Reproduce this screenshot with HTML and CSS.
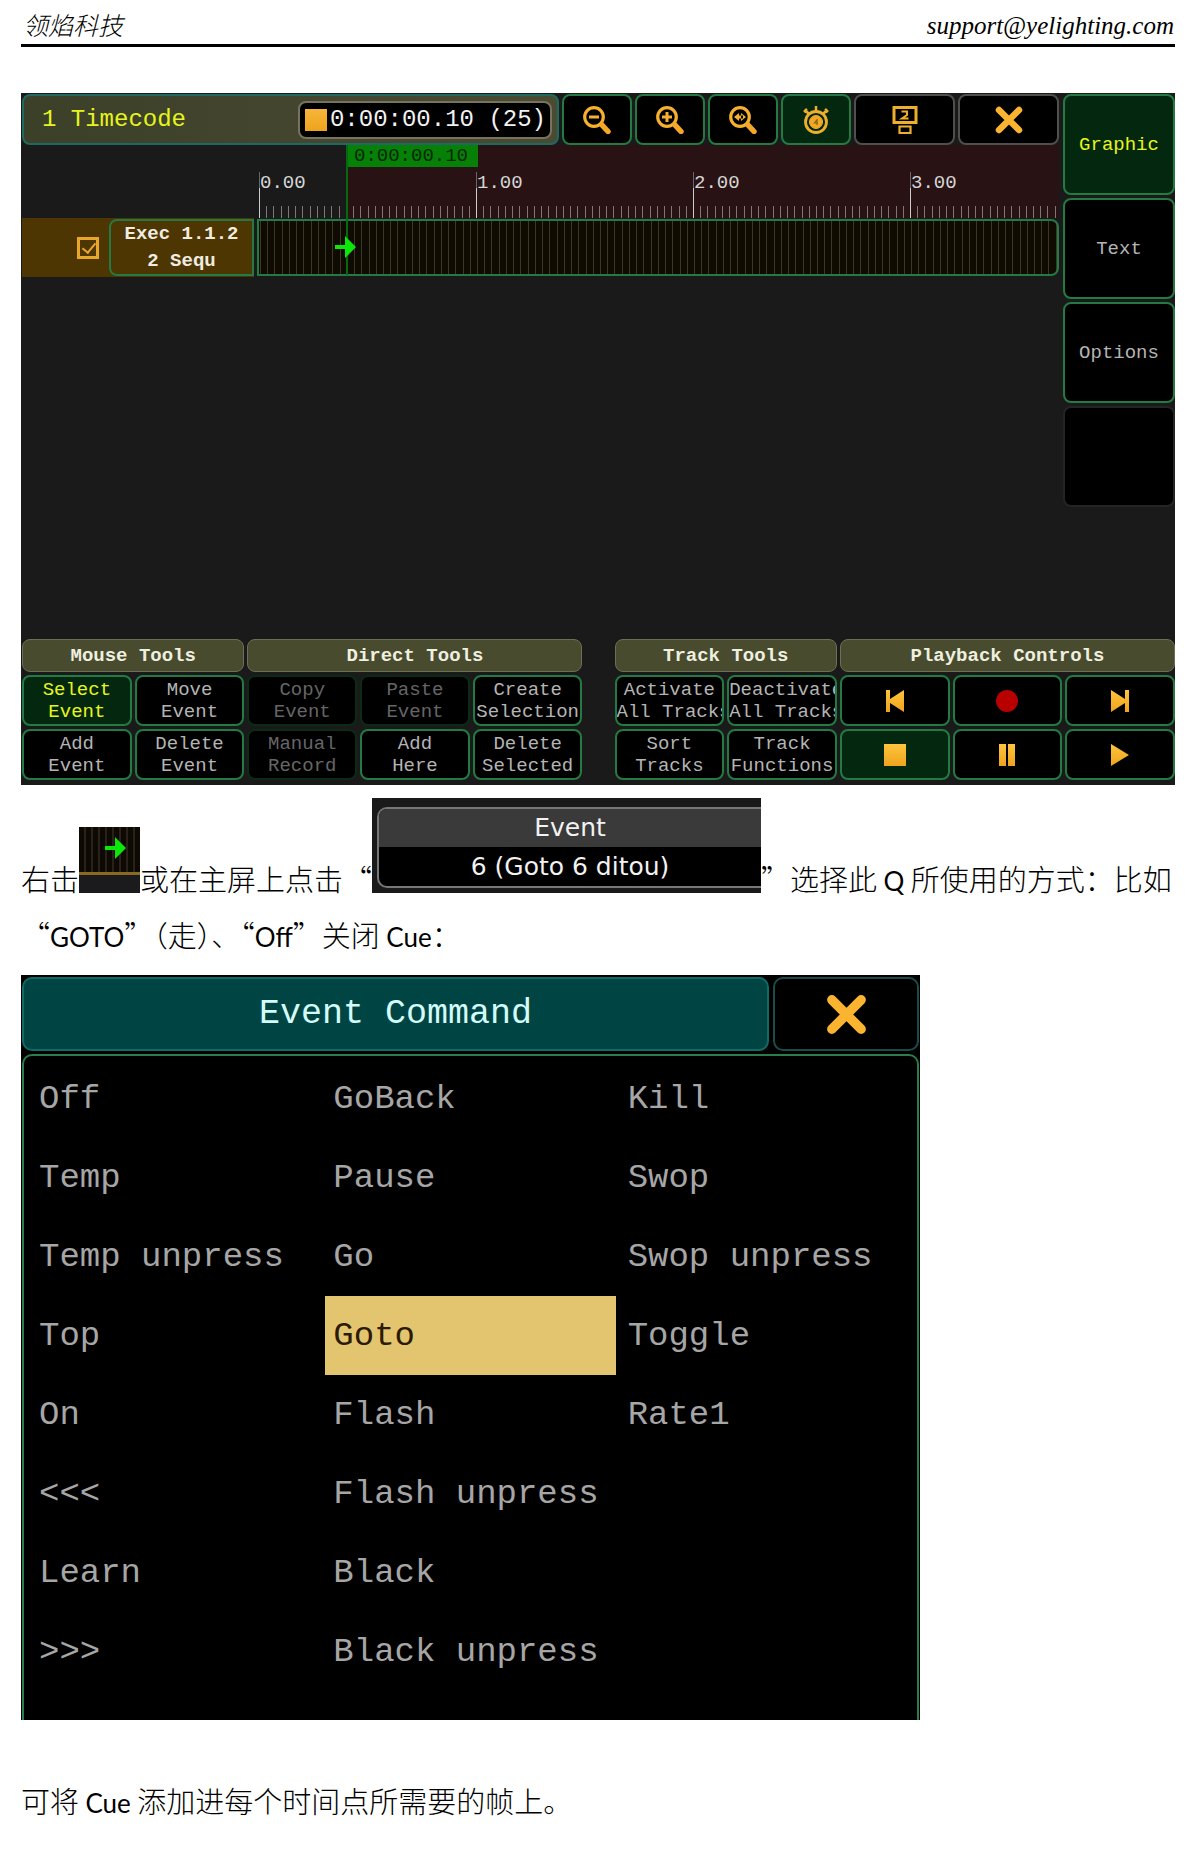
FILE: index.html
```html
<!DOCTYPE html>
<html lang="zh-CN">
<head>
<meta charset="utf-8">
<title>领焰科技</title>
<link rel="stylesheet" href="styles.css">
</head>
<body>
<svg class="defs" aria-hidden="true">
  <defs>
    <linearGradient id="gold" x1="0" y1="0" x2="0" y2="1">
      <stop offset="0" stop-color="#ffc53d"/><stop offset="1" stop-color="#eea31c"/>
    </linearGradient>
    <symbol id="lens" viewBox="0 0 28 28">
      <circle cx="11" cy="11" r="9.300" fill="none" stroke="#f5b02e" stroke-width="3.200"/>
      <path d="M19 19l6 6.500" stroke="#f5a826" stroke-width="5.500" stroke-linecap="round"/>
    </symbol>
    <symbol id="cross" viewBox="0 0 28 28">
      <path d="M4 4l20 20M24 4L4 24" stroke="#fab42f" stroke-width="6.500" stroke-linecap="round"/>
    </symbol>
    <symbol id="arrow" viewBox="0 0 22 22">
      <path d="M1 9h10V0l11 11-11 11v-9H1z" fill="#0be60b"/>
    </symbol>
  </defs>
</svg>

<header class="page-header">
  <span class="company">领焰科技</span>
  <a class="mail" href="mailto:support@yelighting.com">support@yelighting.com</a>
</header>

<main class="page">
  <section class="console" aria-label="Timecode">
    <div class="console-top">
      <div class="workspace">
        <div class="toolbar">
          <div class="title-bar">
            <h1 class="title">1 Timecode</h1>
            <div class="clock"><span class="clock-state"></span>0:00:00.10 (25)</div>
          </div>
          <button class="key tool" aria-label="Zoom out"><svg class="icon"><use href="#lens"/><path d="M6 11h10" stroke="#f5b02e" stroke-width="3"/></svg></button>
          <button class="key tool" aria-label="Zoom in"><svg class="icon"><use href="#lens"/><path d="M6 11h10M11 6v10" stroke="#f5b02e" stroke-width="3"/></svg></button>
          <button class="key tool" aria-label="Zoom to fit"><svg class="icon"><use href="#lens"/><path d="M5 11l5-4v8zM17 11l-5-4v8zM8 9.500h6v3H8z" fill="#f5b02e"/></svg></button>
          <button class="key tool active" aria-label="Timer">
            <svg class="icon" viewBox="0 0 28 28" fill="none" stroke="#eeb02c">
              <circle cx="14" cy="16" r="10.500" stroke-width="2.800"/><circle cx="14" cy="16" r="6.500" fill="#f5a623" stroke-width="1"/>
              <path d="M14 0v5M3 4l4 4M25 4l-4 4M2 6l3-3M26 6l-3-3" stroke-width="2.500"/><path d="M15.500 13l-3 4h3.500M15 14v5" stroke="#7a6a1a" stroke-width="1.200"/>
            </svg>
          </button>
          <button class="key tool wide plain" aria-label="Screen 2">
            <svg class="icon" viewBox="0 0 28 28" fill="none" stroke="#eeb02c">
              <path d="M3 1.500h22v15H3z" stroke-width="3"/><path d="M8.500 20.500h11v6.500h-11z" stroke-width="2.200"/>
              <path d="M10.500 5.500h5.500v3.500L11 12.500h6.500" stroke-width="2"/>
            </svg>
          </button>
          <button class="key tool wide plain" aria-label="Close"><svg class="icon"><use href="#cross"/></svg></button>
        </div>

        <div class="timeline">
          <div class="ruler">
            <span class="second">0.00</span><span class="second">1.00</span><span class="second">2.00</span><span class="second">3.00</span>
          </div>
          <div class="track-head">
            <input class="track-check" type="checkbox" checked aria-label="Exec 1.1.2">
            <div class="track-name">Exec 1.1.2<br>2 Sequ</div>
          </div>
          <div class="track"></div>
          <div class="playhead">
            <span class="playhead-time">0:00:00.10</span>
            <svg class="marker"><use href="#arrow"/></svg>
          </div>
        </div>
      </div>
      <nav class="side">
        <button class="key active">Graphic</button>
        <button class="key">Text</button>
        <button class="key">Options</button>
        <button class="key empty" aria-label="Empty"></button>
      </nav>
    </div>

    <div class="tools">
      <div class="tool-set">
        <h2 class="group span2">Mouse Tools</h2>
        <h2 class="group span3">Direct Tools</h2>
        <button class="key active">Select<br>Event</button>
        <button class="key">Move<br>Event</button>
        <button class="key" disabled>Copy<br>Event</button>
        <button class="key" disabled>Paste<br>Event</button>
        <button class="key">Create<br>Selection</button>
        <button class="key">Add<br>Event</button>
        <button class="key">Delete<br>Event</button>
        <button class="key" disabled>Manual<br>Record</button>
        <button class="key">Add<br>Here</button>
        <button class="key">Delete<br>Selected</button>
      </div>
      <div class="tool-set">
        <h2 class="group span2">Track Tools</h2>
        <h2 class="group span3">Playback Controls</h2>
        <button class="key">Activate<br>All Tracks</button>
        <button class="key">Deactivate<br>All Tracks</button>
        <button class="key" aria-label="Previous"><svg class="glyph" viewBox="0 0 22 22"><path d="M2 0h4v9L20 0v22L6 13v9H2z" fill="url(#gold)"/></svg></button>
        <button class="key" aria-label="Record"><svg class="glyph" viewBox="0 0 22 22"><circle cx="11" cy="11" r="11" fill="#b80000"/></svg></button>
        <button class="key" aria-label="Next"><svg class="glyph" viewBox="0 0 22 22"><path d="M20 0h-4v9L2 0v22l14-9v9h4z" fill="url(#gold)"/></svg></button>
        <button class="key">Sort<br>Tracks</button>
        <button class="key">Track<br>Functions</button>
        <button class="key active" aria-label="Stop"><svg class="glyph" viewBox="0 0 22 22"><path d="M0 0h22v22H0z" fill="url(#gold)"/></svg></button>
        <button class="key" aria-label="Pause"><svg class="glyph" viewBox="0 0 22 22"><path d="M3 0h7v22H3zM12 0h7v22h-7z" fill="url(#gold)"/></svg></button>
        <button class="key" aria-label="Play"><svg class="glyph" viewBox="0 0 22 22"><path d="M2 0l18 11L2 22z" fill="url(#gold)"/></svg></button>
      </div>
    </div>
  </section>

  <p class="prose">右击<span class="snippet"><svg class="marker"><use href="#arrow"/></svg></span>或在主屏上点击“<span class="event-card"><span class="event-box"><span class="event-head">Event</span><span class="event-body">6 (Goto 6 ditou)</span></span></span>”选择此 <span class="latin">Q</span> 所使用的方式：比如“<span class="latin">GOTO</span>”（走）、“<span class="latin">Off</span>”关闭 <span class="latin">Cue</span>：</p>

  <section class="dialog" aria-label="Event Command">
    <div class="dialog-bar">
      <h2 class="dialog-title">Event Command</h2>
      <button class="dialog-close" aria-label="Close"><svg class="icon-large"><use href="#cross"/></svg></button>
    </div>
    <div class="commands">
      <button class="command">Off</button>
      <button class="command">Temp</button>
      <button class="command">Temp unpress</button>
      <button class="command">Top</button>
      <button class="command">On</button>
      <button class="command">&lt;&lt;&lt;</button>
      <button class="command">Learn</button>
      <button class="command">&gt;&gt;&gt;</button>
      <button class="command">GoBack</button>
      <button class="command">Pause</button>
      <button class="command">Go</button>
      <button class="command selected">Goto</button>
      <button class="command">Flash</button>
      <button class="command">Flash unpress</button>
      <button class="command">Black</button>
      <button class="command">Black unpress</button>
      <button class="command">Kill</button>
      <button class="command">Swop</button>
      <button class="command">Swop unpress</button>
      <button class="command">Toggle</button>
      <button class="command">Rate1</button>
    </div>
  </section>

  <p class="prose closing">可将 <span class="latin">Cue</span> 添加进每个时间点所需要的帧上。</p>
</main>
</body>
</html>
```
FILE: styles.css
```css
* { box-sizing: border-box; }

body {
  margin: 0;
  background: #fff;
  color: #000;
  font-family: "Noto Sans CJK SC", sans-serif;
}

.defs { position: absolute; width: 0; height: 0; }

h1, h2, p { margin: 0; font-weight: 400; }

button { font: inherit; color: inherit; cursor: pointer; }

/* Page header */
.page-header {
  display: flex;
  justify-content: space-between;
  align-items: flex-start;
  margin: 0 18px 0 21px;
  padding: 8px 1px 0 2px;
  height: 47px;
  border-bottom: 3px solid #000;
  font-size: 25px;
  line-height: 36px;
  font-style: italic;
}
.company { font-weight: 300; line-height: 32px; }
.mail {
  color: #000;
  text-decoration: none;
  font-family: "Liberation Serif", serif;
}

.page { padding: 46px 18px 40px 21px; }

/* Timecode console */
.console {
  padding: 1px 0 5px 1px;
  background: #1a1a1a;
  color: #b4b4b4;
  font-family: "Liberation Mono", monospace;
  font-size: 19px;
  line-height: 22px;
}
.console-top {
  display: flex;
  gap: 4px;
  min-height: 545px;
}
.workspace { flex: 1; min-width: 0; }

.key {
  min-width: 0;
  padding: 0;
  overflow: hidden;
  white-space: nowrap;
  text-align: center;
  background: #000;
  border: 2px solid #237a42;
  border-radius: 8px;
}
.key.active { background: #04280f; color: #e6f51c; }
.key:disabled { border-color: #0c2a17; color: #666; }
.key.plain { border-color: #4f4f4b; }
.key.empty { border-color: #242424; }

.toolbar { display: flex; gap: 3px; height: 51px; }
.title-bar {
  flex: 1;
  display: flex;
  align-items: center;
  justify-content: space-between;
  padding: 0 5px 0 18px;
  background: linear-gradient(90deg, #3c4029, #4b4a33);
  border: 2px solid #1d6b60;
  border-radius: 8px;
  font-size: 24px;
}
.title { font-size: 24px; color: #e6f51c; }
.clock {
  display: flex;
  align-items: center;
  gap: 3px;
  height: 38px;
  padding: 0 4px 0 5px;
  background: #000;
  border: 2px solid #77735c;
  border-radius: 8px;
  color: #f2f2f2;
}
.clock-state { width: 22px; height: 22px; background: linear-gradient(#f7b53a, #eea31c); }
.tool { flex: none; width: 70px; }
.tool.wide { width: 101px; }
.icon { display: block; width: 28px; height: 28px; margin: 0 auto; }

.timeline {
  position: relative;
  display: grid;
  grid-template-columns: 232px 1fr;
  grid-template-rows: 73px 59px;
  column-gap: 3px;
}
.ruler {
  grid-column: 2;
  display: flex;
  padding: 27px 0 0 2px;
  overflow: hidden;
  background: linear-gradient(90deg, #1a1a1a 89px, #281214 89px);
}
.second {
  flex: none;
  width: 217px;
  padding-left: 1px;
  color: #d6d6d6;
  background:
    linear-gradient(#666 16px, #ccc 16px) 0 0 / 1px 100% no-repeat,
    repeating-linear-gradient(90deg, #7d7776 0 1px, transparent 1px calc(217px / 30)) 0 34px / 100% 12px no-repeat;
}
.track-head {
  display: flex;
  align-items: center;
  justify-content: flex-end;
  gap: 10px;
  background: #4d3602;
}
.track-check {
  appearance: none;
  position: relative;
  width: 22px;
  height: 22px;
  margin: 0;
  border: 3px solid #e8a62b;
}
.track-check::after {
  content: "";
  position: absolute;
  left: 5px;
  top: 0;
  width: 6px;
  height: 11px;
  border: solid #e8a62b;
  border-width: 0 2px 2px 0;
  transform: rotate(40deg);
}
.track-name {
  width: 145px;
  height: 57px;
  border: 2px solid #237a42;
  border-radius: 8px 0 0 8px;
  color: #f0ece0;
  font-weight: 700;
  line-height: 27px;
  text-align: center;
}
.track {
  margin: 1px 0;
  border: 2px solid #237a42;
  border-radius: 0 8px 8px 0;
  background: repeating-linear-gradient(90deg, #100b02 0 1px, #3d3727 1px 2px, #100b02 2px calc(217px / 30));
}
.playhead {
  position: absolute;
  left: 324px;
  top: 0;
  bottom: 2px;
  border-left: 2px solid #07690f;
}
.playhead-time {
  display: block;
  width: 130px;
  padding-left: 6px;
  background: #078007;
  color: #032803;
}
.marker { width: 22px; height: 22px; }
.playhead .marker { position: absolute; left: -14px; top: 91px; }

.side {
  display: grid;
  grid-template-rows: repeat(4, 101px);
  gap: 3px;
  width: 112px;
}

.tools { display: flex; gap: 32px; }
.tool-set {
  flex: 1;
  min-width: 0;
  display: grid;
  grid-template-columns: repeat(5, minmax(0, 1fr));
  grid-template-rows: 33px 51px 51px;
  gap: 3px;
}
.group {
  font-size: 19px;
  font-weight: 700;
  line-height: 32px;
  text-align: center;
  color: #efefe0;
  background: #484b2d;
  border: 1px solid #6d6f55;
  border-radius: 8px;
}
.span2 { grid-column: span 2; }
.span3 { grid-column: span 3; }
.glyph { display: block; width: 22px; height: 22px; margin: 0 auto; }

/* Instruction text */
.prose {
  margin-top: 13px;
  font-size: 29px;
  font-weight: 300;
  line-height: 53px;
}
.latin { font-family: Lato, sans-serif; font-size: 26px; font-weight: 400; }
.snippet {
  display: inline-block;
  overflow: hidden;
  width: 61px;
  height: 66px;
  padding: 8px 0 0 25px;
  vertical-align: -2px;
  line-height: 22px;
  background:
    linear-gradient(transparent 45px, #8a6a20 45px 48px, #1b1b1d 48px),
    repeating-linear-gradient(90deg, #0d0a04 0 5px, #2b2118 5px 7px);
}
.event-card {
  display: inline-block;
  overflow: hidden;
  width: 389px;
  height: 95px;
  padding: 9px 0 5px 5px;
  vertical-align: -2px;
  background: #1a1a1a;
  color: #f2f2f2;
  font-family: "DejaVu Sans", sans-serif;
  font-size: 25px;
  font-weight: 400;
  line-height: 38px;
  text-align: center;
}
.event-box {
  display: block;
  overflow: hidden;
  border: 2px solid #777;
  border-right: 0;
  border-radius: 10px 0 0 10px;
  background: #000;
}
.event-head { display: block; background: #3a3a3a; }
.event-body { display: block; line-height: 39px; }

/* Event Command dialog */
.dialog {
  max-width: 899px;
  margin-top: 11px;
  padding: 2px 1px 0 1px;
  background: #000;
  font-family: "Liberation Mono", monospace;
  font-size: 34px;
}
.dialog-bar { display: flex; gap: 4px; height: 74px; }
.dialog-title {
  flex: 1;
  font-size: 35px;
  line-height: 70px;
  text-align: center;
  color: #d4fbf8;
  background: #004544;
  border: 2px solid #116a66;
  border-radius: 10px;
}
.dialog-close {
  width: 146px;
  padding: 0;
  background: #000;
  border: 2px solid #1b4c4a;
  border-radius: 10px;
}
.icon-large { display: block; width: 41px; height: 41px; margin: 0 auto; }
.commands {
  display: grid;
  grid-auto-flow: column;
  grid-template-rows: repeat(8, 79px);
  grid-template-columns: repeat(3, minmax(0, 1fr));
  column-gap: 4px;
  margin-top: 3px;
  padding: 3px 7px 29px 7px;
  border: 2px solid #2b7d49;
  border-bottom: 0;
  border-radius: 10px 10px 0 0;
}
.command {
  padding: 0 0 0 8px;
  border: 0;
  background: none;
  color: #a6a6a6;
  text-align: left;
  white-space: nowrap;
}
.command.selected { background: #e3c56f; color: #2c1a04; }

.closing { margin-top: 54px; }
```
